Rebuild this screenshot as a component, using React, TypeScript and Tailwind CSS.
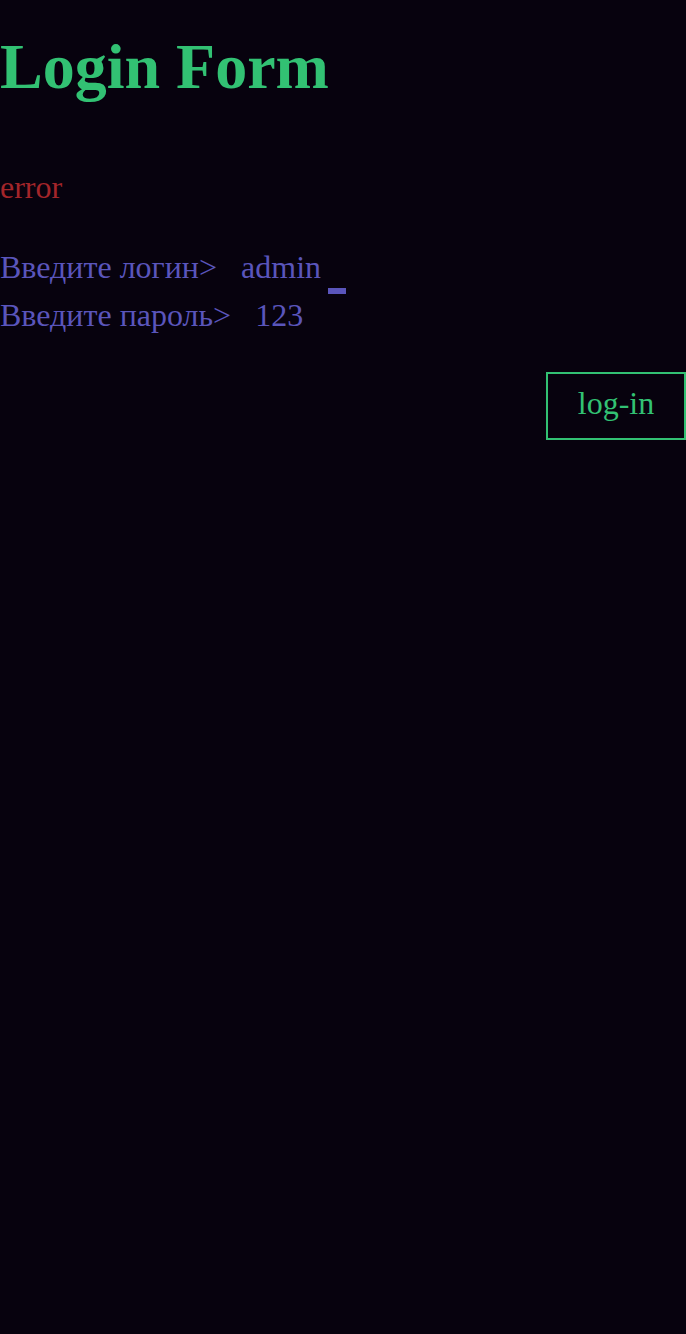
import { useState } from "react";

// ── Terminal-style login form ────────────────────────────────────────────────
export default function App() {
  const [login] = useState("admin");
  const [password] = useState("123");

  return (
    <div className="min-h-[1334px] w-full bg-[#07020e] font-['Liberation_Serif','Times_New_Roman',serif]">
      <h1 className="pt-[31px] text-[64px] font-bold leading-[72px] text-[#32c173]">Login Form</h1>

      <p className="mt-[60px] text-[32px] leading-[48px] text-[#a3252a]">error</p>

      <div className="mt-[32px] flex flex-col text-[32px] leading-[48px] text-[#5a55bb]">
        <div className="flex items-baseline">
          <span>Введите логин&gt;</span>
          <span className="ml-[24px]">{login}</span>
          <span className="ml-[7px] inline-block h-[6px] w-[18px] translate-y-[16px] bg-[#5a55bb]" />
        </div>
        <div className="flex items-baseline">
          <span>Введите пароль&gt;</span>
          <span className="ml-[24px]">{password}</span>
        </div>
      </div>

      <div className="mt-[33px] flex justify-end">
        <button className="h-[68px] w-[140px] border-2 border-[#32c173] pb-[6px] text-[32px] text-[#32c173]">
          log-in
        </button>
      </div>
    </div>
  );
}
